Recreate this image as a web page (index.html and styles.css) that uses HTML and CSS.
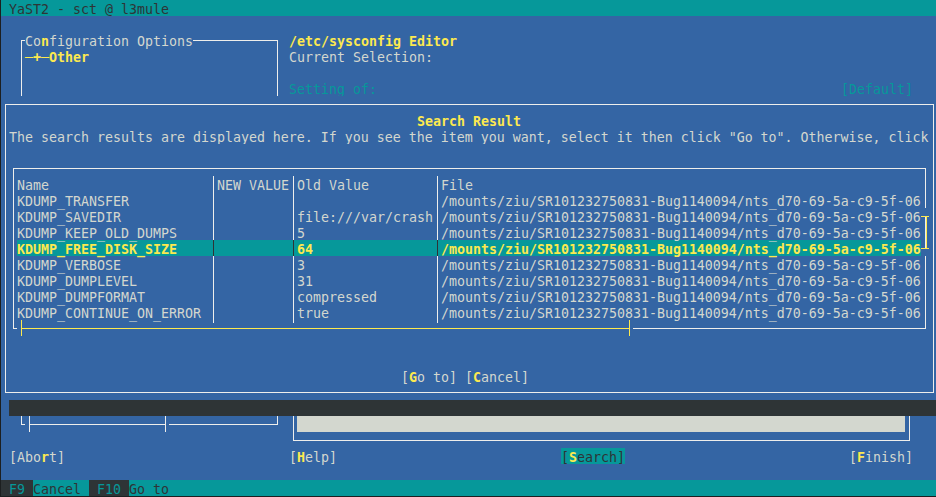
FILE: index.html
```html
<!DOCTYPE html>
<html lang="en">
<head>
<meta charset="utf-8">
<title>YaST2 - sct @ l3mule</title>
<link rel="stylesheet" href="styles.css">
</head>
<body>
<div class="screen">
  <header class="titlebar">YaST2 - sct @ l3mule</header>

  <main class="main">
    <section class="left">
      <fieldset class="tree">
        <legend>Co<b class="hk">n</b>figuration Options</legend>
        <div class="tree-item">─+─Other</div>
      </fieldset>
      <div class="tree-scroll">
        <span class="ts-corner"></span><span class="ts-thumb"></span><span class="ts-track"></span>
      </div>
    </section>

    <section class="right">
      <h1 class="editor-title">/etc/sysconfig Editor</h1>
      <div class="line">Current Selection:</div>
      <div class="line"></div>
      <div class="setting"><span>Setting of:</span><span>[Default]</span></div>
      <div class="value-box"><div class="value-field"></div></div>
    </section>
  </main>

  <nav class="buttons">
    <span class="btn">[Abo<b class="hk">r</b>t]</span>
    <span class="btn">[<b class="hk">H</b>elp]</span>
    <span class="btn focus">[<b class="hk">S</b>earch]</span>
    <span class="btn">[<b class="hk">F</b>inish]</span>
  </nav>
  <div class="line"></div>
  <footer class="fkeys"><span class="fk"> F9 </span><span>Cancel </span><span class="fk"> F10 </span><span>Go to</span></footer>

  <div class="dialog">
    <h2 class="dlg-title">Search Result</h2>
    <p class="dlg-text">The search results are displayed here. If you see the item you want, select it then click "Go to". Otherwise, click</p>
    <div class="line"></div>
    <div class="table-frame">
      <div class="tr"><span>Name</span><i class="sep"></i><span>NEW VALUE</span><i class="sep"></i><span>Old Value</span><i class="sep"></i><span>File</span></div>
      <div class="tr"><span>KDUMP_TRANSFER</span><i class="sep"></i><span></span><i class="sep"></i><span></span><i class="sep"></i><span>/mounts/ziu/SR101232750831-Bug1140094/nts_d70-69-5a-c9-5f-06</span></div>
      <div class="tr"><span>KDUMP_SAVEDIR</span><i class="sep"></i><span></span><i class="sep"></i><span>file:///var/crash</span><i class="sep"></i><span>/mounts/ziu/SR101232750831-Bug1140094/nts_d70-69-5a-c9-5f-06</span></div>
      <div class="tr"><span>KDUMP_KEEP_OLD_DUMPS</span><i class="sep"></i><span></span><i class="sep"></i><span>5</span><i class="sep"></i><span>/mounts/ziu/SR101232750831-Bug1140094/nts_d70-69-5a-c9-5f-06</span></div>
      <div class="tr sel"><span>KDUMP_FREE_DISK_SIZE</span><i class="sep"></i><span></span><i class="sep"></i><span>64</span><i class="sep"></i><span>/mounts/ziu/SR101232750831-Bug1140094/nts_d70-69-5a-c9-5f-06</span></div>
      <div class="tr"><span>KDUMP_VERBOSE</span><i class="sep"></i><span></span><i class="sep"></i><span>3</span><i class="sep"></i><span>/mounts/ziu/SR101232750831-Bug1140094/nts_d70-69-5a-c9-5f-06</span></div>
      <div class="tr"><span>KDUMP_DUMPLEVEL</span><i class="sep"></i><span></span><i class="sep"></i><span>31</span><i class="sep"></i><span>/mounts/ziu/SR101232750831-Bug1140094/nts_d70-69-5a-c9-5f-06</span></div>
      <div class="tr"><span>KDUMP_DUMPFORMAT</span><i class="sep"></i><span></span><i class="sep"></i><span>compressed</span><i class="sep"></i><span>/mounts/ziu/SR101232750831-Bug1140094/nts_d70-69-5a-c9-5f-06</span></div>
      <div class="tr"><span>KDUMP_CONTINUE_ON_ERROR</span><i class="sep"></i><span></span><i class="sep"></i><span>true</span><i class="sep"></i><span>/mounts/ziu/SR101232750831-Bug1140094/nts_d70-69-5a-c9-5f-06</span></div>
      <div class="hscroll"><span class="hthumb"></span></div>
      <span class="vthumb"></span>
    </div>
    <div class="dlg-buttons">
      <span>[<b class="hk">G</b>o to]</span>
      <span>[<b class="hk">C</b>ancel]</span>
    </div>
  </div>
</div>
</body>
</html>
```

FILE: styles.css
```css
* { box-sizing: border-box; margin: 0; padding: 0; }

html, body { width: 936px; height: 497px; overflow: hidden; }

body {
  background: #1c1f20;
  font-family: "DejaVu Sans Mono", monospace;
  font-size: 13.29px;
  line-height: 19px;
  color: #d3d7cf;
}

b { font-weight: bold; }
i { font-style: normal; }

.screen {
  position: relative;
  margin-left: 1px;
  width: 936px;
  height: 496px;
  background: #3465a4;
  overflow: hidden;
  color: #d3d7cf;
}

.hk { color: #fce94f; font-weight: bold; }

.line { height: 16px; }

/* title bar */
.titlebar {
  height: 16px;
  background: #06989a;
  color: #2e3436;
  padding-left: 8px;
  white-space: pre;
}

/* main area: rows 1..27 */
.main {
  display: grid;
  grid-template-columns: 280px 656px;
  height: 432px;
}

.left {
  display: flex;
  flex-direction: column;
  padding: 16px 0;
  color: #eeeeec;
}

.tree {
  flex: 1;
  margin-left: 20px;
  width: 257px;
  min-width: 0;
  border: 1px solid #eeeeec;
  border-bottom: none;
  padding: 0 0 0 3px;
}

.tree legend {
  height: 16px;
  padding: 0;
  margin: 0;
  color: #d3d7cf;
  white-space: pre;
}

.tree-item {
  height: 16px;
  color: #fce94f;
  font-weight: bold;
  white-space: pre;
}

.tree-scroll {
  display: flex;
  height: 16px;
  margin-left: 16px;
}

.ts-corner {
  width: 4px;
  height: 9px;
  margin-left: 4px;
  border-left: 1px solid #eeeeec;
  border-bottom: 1px solid #eeeeec;
}

.ts-thumb {
  width: 137px;
  height: 16px;
  margin-left: 4px;
  border-left: 1px solid #eeeeec;
  border-right: 1px solid #eeeeec;
  background: linear-gradient(#eeeeec, #eeeeec) 0 8px / 100% 1px no-repeat;
}

.ts-track {
  width: 109px;
  height: 9px;
  margin-left: 3px;
  border-bottom: 1px solid #eeeeec;
  border-right: 1px solid #eeeeec;
}

.right {
  display: flex;
  flex-direction: column;
  padding-top: 16px;
}

.right > .line,
.editor-title {
  height: 16px;
  padding-left: 8px;
}

.editor-title {
  font-size: inherit;
  font-weight: bold;
  color: #fce94f;
}

.setting {
  display: flex;
  justify-content: space-between;
  width: 624px;
  height: 16px;
  margin-left: 8px;
  color: #06989a;
}

.value-box {
  display: flex;
  flex-direction: column;
  margin-top: auto;
  margin-bottom: 7px;
  margin-left: 12px;
  width: 617px;
  height: 81px;
  border: 1px solid #eeeeec;
  padding: 7px 4px 8px 3px;
}

.value-field {
  margin-top: auto;
  height: 16px;
  width: 608px;
  background: #d3d7cf;
}

/* bottom buttons, row 28 */
.buttons {
  display: grid;
  grid-template-columns: 280px 272px 288px auto;
  height: 16px;
  padding-left: 8px;
  white-space: pre;
}

.btn {
  justify-self: start;
  height: 16px;
}

.btn.focus {
  background: #06989a;
  color: #2e3436;
}

/* function key bar, row 30 */
.fkeys {
  display: flex;
  height: 16px;
  background: #06989a;
  color: #2e3436;
  white-space: pre;
}

.fkeys span { height: 16px; }

.fkeys .fk {
  background: #2e3436;
  color: #06989a;
}

/* popup dialog, rows 6..24 */
.dialog {
  position: absolute;
  top: 96px;
  left: 0;
  width: 936px;
  height: 304px;
  background: #3465a4;
  padding: 16px 8px;
  box-shadow: 8px 16px 0 #2e3436;
}

.dialog::before {
  content: "";
  position: absolute;
  inset: 8px 3px 7px 4px;
  border: 1px solid #eeeeec;
  pointer-events: none;
}

.dlg-title {
  height: 16px;
  font-size: inherit;
  font-weight: bold;
  color: #fce94f;
  text-align: center;
}

.dlg-text {
  height: 16px;
  white-space: pre;
  overflow: hidden;
}

.table-frame {
  position: relative;
  height: 176px;
  padding: 16px 8px 0;
}

.table-frame::before {
  content: "";
  position: absolute;
  inset: 8px 3px 7px 4px;
  border: 1px solid #eeeeec;
  pointer-events: none;
}

.tr {
  display: grid;
  grid-template-columns: 192px 8px 72px 8px 136px 8px 480px;
  height: 16px;
  white-space: pre;
}

.sep {
  background: linear-gradient(#eeeeec, #eeeeec) 4px 0 / 1px 100% no-repeat;
}

.tr.sel {
  background: #06989a;
  color: #fce94f;
  font-weight: bold;
}

.tr.sel .sep {
  background-image: linear-gradient(#2e3436, #2e3436);
}

.hscroll { height: 16px; }

/* yellow "├────┤" thumb drawn over the frame's bottom line;
   the two blue 1px pieces open the gaps on either side of the ticks */
.hthumb {
  position: relative;
  display: block;
  width: 616px;
  height: 16px;
  background-image:
    linear-gradient(#fce94f, #fce94f),
    linear-gradient(#fce94f, #fce94f),
    linear-gradient(#fce94f, #fce94f),
    linear-gradient(#3465a4, #3465a4),
    linear-gradient(#3465a4, #3465a4);
  background-size: 1px 16px, 1px 16px, 609px 1px, 4px 1px, 3px 1px;
  background-position: 4px 0, 612px 0, 4px 8px, 0 8px, 613px 8px;
  background-repeat: no-repeat;
}

.vthumb {
  position: absolute;
  left: 912px;
  top: 48px;
  width: 8px;
  height: 48px;
  background-image:
    linear-gradient(#fce94f, #fce94f),
    linear-gradient(#fce94f, #fce94f),
    linear-gradient(#fce94f, #fce94f),
    linear-gradient(#3465a4, #3465a4),
    linear-gradient(#3465a4, #3465a4);
  background-size: 8px 1px, 8px 1px, 1px 33px, 1px 8px, 1px 8px;
  background-position: 0 8px, 0 40px, 5px 8px, 4px 0, 4px 41px;
  background-repeat: no-repeat;
}

.dlg-buttons {
  display: flex;
  justify-content: center;
  gap: 8px;
  width: 912px;
  height: 16px;
  margin-top: 32px;
  white-space: pre;
}
```
